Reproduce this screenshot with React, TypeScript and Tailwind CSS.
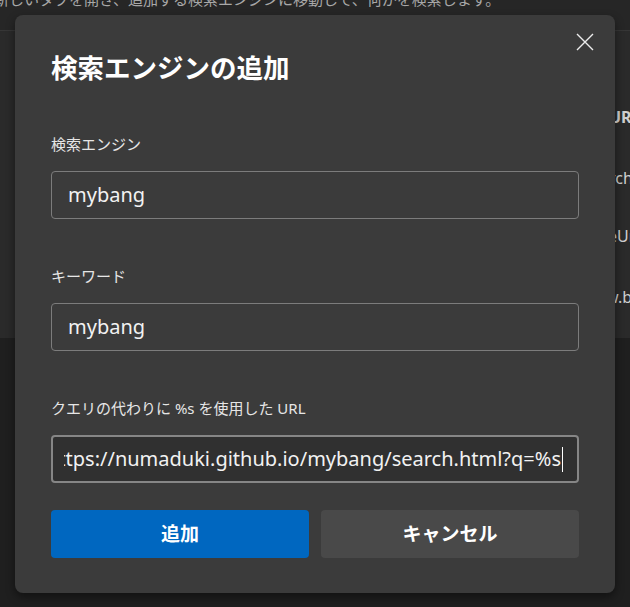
const font = "font-['Noto_Sans','Noto_Sans_CJK_JP',sans-serif]"

function Field({ label, value }: { label: string; value: string }) {
  return (
    <div>
      <label className="block text-[15px] leading-[24px] text-[#e6e6e6]">{label}</label>
      <div className="mt-[15px] h-[48px] rounded-[4px] border border-[#7c7c7c] px-4 flex items-center text-[20px] text-[#f2f2f2]">
        {value}
      </div>
    </div>
  )
}

export default function App() {
  return (
    <div className={`relative w-[630px] h-[607px] overflow-hidden bg-[#1f1f1f] ${font}`}>
      {/* page behind the dialog */}
      <div className="h-[31px] bg-[#262626] border-b border-[#363636] overflow-hidden">
        <p className="-mt-[11px] -ml-[6px] whitespace-nowrap text-[15px] leading-[20px] text-[#a8a8a8]">
          新しいタブを開き、追加する検索エンジンに移動して、何かを検索します。
        </p>
      </div>
      <div className="h-[307px] bg-[#2a2a2a] pt-[74px] text-[16px] leading-[24px] text-[#cfcfcf] whitespace-nowrap">
        <p className="ml-[609px] font-bold">URL</p>
        <p className="ml-[600px] mt-[37px]">arch</p>
        <p className="ml-[608px] mt-[34px]">eUrl</p>
        <p className="ml-[606px] mt-[37px]">w.bing</p>
      </div>

      {/* dialog */}
      <div className="absolute left-[15px] top-[15px] w-[600px] h-[578px] rounded-lg bg-[#3b3b3b] px-9 pt-[35px] shadow-[0_4px_10px_rgba(0,0,0,0.45)]">
        <button className="absolute right-[21px] top-[18px] w-[18px] h-[18px]">
          <svg viewBox="0 0 18 18" width="18" height="18" fill="none" stroke="#ececec" strokeWidth="1.4">
            <path d="M1 1L17 17M17 1L1 17" />
          </svg>
        </button>
        <h2 className="text-[26.5px] leading-[36px] font-bold text-white">検索エンジンの追加</h2>

        <div className="mt-[46px] flex flex-col gap-[45px]">
          <Field label="検索エンジン" value="mybang" />
          <Field label="キーワード" value="mybang" />
          <div>
            <label className="block text-[15px] leading-[24px] text-[#e6e6e6]">クエリの代わりに %s を使用した URL</label>
            <div className="mt-[15px] h-[48px] rounded-[4px] border-2 border-[#868686] bg-[#303030] pl-[11px] pr-[14px] flex items-center">
              <div className="flex-1 flex items-center justify-end overflow-hidden whitespace-nowrap text-[20px] text-[#f2f2f2]">
                <span>https://numaduki.github.io/mybang/search.html?q=%s</span>
                <span className="ml-px w-px h-[25px] bg-white shrink-0" />
              </div>
            </div>
          </div>
        </div>

        <div className="mt-[27px] grid grid-cols-2 gap-3">
          <button className="h-[48px] rounded-[4px] bg-[#0067c0] text-[19px] font-bold text-white">追加</button>
          <button className="h-[48px] rounded-[4px] bg-[#494949] text-[19px] font-bold text-white">キャンセル</button>
        </div>
      </div>
    </div>
  )
}
